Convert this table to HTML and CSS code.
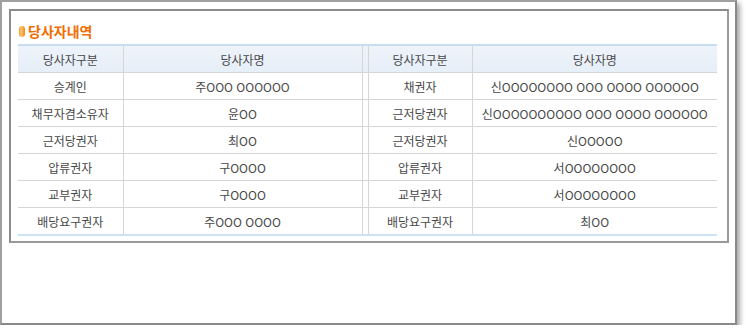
FILE: index.html
```html
<!DOCTYPE html>
<html lang="ko">
<head>
<meta charset="utf-8">
<link rel="stylesheet" href="styles.css">
</head>
<body>
<div class="window">
  <div class="panel">
    <h2 class="title"><span class="bullet"></span>당사자내역</h2>
    <table class="grid">
      <colgroup>
        <col class="c-type"><col class="c-name"><col class="c-gap"><col class="c-type2"><col class="c-name2">
      </colgroup>
      <thead>
        <tr><th>당사자구분</th><th>당사자명</th><th class="gap"></th><th>당사자구분</th><th>당사자명</th></tr>
      </thead>
      <tbody>
        <tr><td>승계인</td><td>주OOO OOOOOO</td><td class="gap"></td><td>채권자</td><td>신OOOOOOOO OOO OOOO OOOOOO</td></tr>
        <tr><td>채무자겸소유자</td><td>윤OO</td><td class="gap"></td><td>근저당권자</td><td>신OOOOOOOOOO OOO OOOO OOOOOO</td></tr>
        <tr><td>근저당권자</td><td>최OO</td><td class="gap"></td><td>근저당권자</td><td>신OOOOO</td></tr>
        <tr><td>압류권자</td><td>구OOOO</td><td class="gap"></td><td>압류권자</td><td>서OOOOOOOO</td></tr>
        <tr><td>교부권자</td><td>구OOOO</td><td class="gap"></td><td>교부권자</td><td>서OOOOOOOO</td></tr>
        <tr><td>배당요구권자</td><td>주OOO OOOO</td><td class="gap"></td><td>배당요구권자</td><td>최OO</td></tr>
      </tbody>
    </table>
  </div>
</div>
</body>
</html>
```

FILE: styles.css
```css
html, body {
  margin: 0;
  padding: 0;
  background: #ffffff;
}
body {
  font-family: "Noto Sans CJK KR", "Noto Sans", sans-serif;
  font-size: 12px;
  color: #484848;
}
.window {
  box-sizing: border-box;
  width: 737px;
  height: 325px;
  border: 2px solid #8a8a8a;
  border-top-color: #a0a0a0;
  border-left-color: #a0a0a0;
  box-shadow: 3px 3px 5px rgba(0, 0, 0, 0.35);
  background: #fff;
  padding: 7px 0 0 7px;
}
.panel {
  width: 720px;
  box-sizing: border-box;
  border: 2px solid #8c8c8c;
  border-right-color: #9a9a9a;
  border-bottom-color: #9a9a9a;
  padding: 12px 0 5px 7px;
}
.title {
  margin: 0 0 5px 0;
  font-size: 14px;
  font-weight: bold;
  color: #f26d00;
  line-height: 16px;
  height: 16px;
  display: flex;
  align-items: center;
}
.bullet {
  display: inline-block;
  width: 6px;
  height: 11px;
  border-radius: 3px;
  background: linear-gradient(90deg, #f8a030, #ffc070 40%, #f08a10);
  margin: 0 3px 0 1px;
}
.grid {
  border-collapse: collapse;
  width: 699px;
  table-layout: fixed;
  border-top: 2px solid #c8dcf2;
  border-bottom: 2px solid #cfe1f4;
}
.c-type { width: 105px; }
.c-name { width: 239px; }
.c-gap { width: 6px; }
.c-type2 { width: 104px; }
.c-name2 { width: 245px; }
.grid th, .grid td {
  border: 1px solid #d6d6d6;
  text-align: center;
  padding: 0;
  white-space: nowrap;
  overflow: hidden;
}
.grid th {
  height: 26px;
  font-weight: normal;
  background: linear-gradient(#eef3fa, #e6eef8);
}
.grid td {
  height: 26px;
}
.grid tbody tr:last-child td { border-bottom: none; }
.grid th:first-child, .grid td:first-child { border-left: none; }
.grid th:last-child, .grid td:last-child { border-right: none; }
```
